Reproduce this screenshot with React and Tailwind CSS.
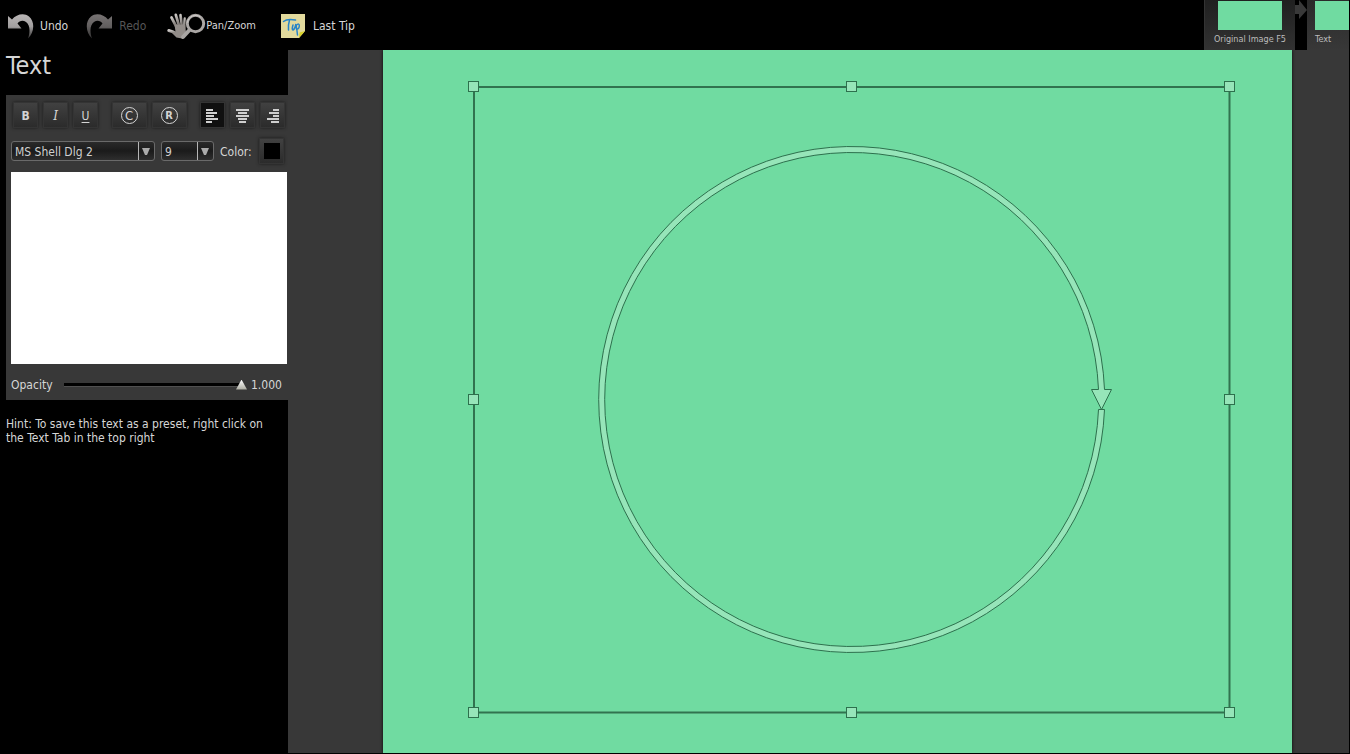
import React, { useState } from "react";

const font = "font-['DejaVu_Sans_Condensed','DejaVu_Sans',sans-serif]";

function UndoIcon({ flipped = false }) {
  const id = flipped ? "redo-fill" : "undo-fill";
  return (
    <svg width="26" height="25" viewBox="0 0 26 25" aria-hidden="true">
      <defs>
        <linearGradient id={id} x1="0" y1="0" x2="0" y2="1">
          <stop offset="0" stopColor={flipped ? "#777373" : "#b9b5b5"} />
          <stop offset="0.5" stopColor={flipped ? "#625f5f" : "#a29f9f"} />
          <stop offset="1" stopColor="#343333" />
        </linearGradient>
      </defs>
      <path
        d="M0 2 L4 5.500 C8 0.500 16 -1.500 21 2.500 C27.500 8 26 19 20 24.500 C22.500 17.500 22 11 18 8 C14.500 5.800 11.500 7 9.500 9.500 L13.500 14.500 L0 14.500 Z"
        fill={`url(#${id})`}
        transform={flipped ? "translate(26 0) scale(-1 1)" : undefined}
      />
    </svg>
  );
}

function PanZoomIcon() {
  return (
    <svg width="39" height="27" viewBox="0 0 39 27" aria-hidden="true">
      <defs>
        <linearGradient id="hand" x1="0" y1="0" x2="0.3" y2="1">
          <stop offset="0" stopColor="#c9c5c2" />
          <stop offset="1" stopColor="#77716d" />
        </linearGradient>
      </defs>
      <g stroke="url(#hand)" strokeLinecap="round" fill="none">
        <path d="M9.500 14 L4.500 4.500" strokeWidth="2.700" />
        <path d="M12.500 14 L8.800 1.800" strokeWidth="2.700" />
        <path d="M15 14 L13.500 2" strokeWidth="2.600" />
        <path d="M17 16 L17.800 5.500" strokeWidth="2.400" />
        <path d="M10 21 L6 18.800 L1.800 17.500" strokeWidth="2.900" />
      </g>
      <path d="M7.500 11.500 L18.200 11.500 L19 20 L15 25.500 L9.500 24.500 L5 20 L8.500 18.500 Z" fill="#928c88" />
      <path d="M22.500 17 L16 24" stroke="#a9a6a4" strokeWidth="4" strokeLinecap="round" />
      <circle cx="28.500" cy="10.500" r="8.200" fill="#000" stroke="#aaa6a4" strokeWidth="3" />
      <path d="M20.500 9.500 A8.200 8.200 0 0 1 33.500 4" fill="none" stroke="#d0cdcb" strokeWidth="1" />
    </svg>
  );
}

function TipIcon() {
  return (
    <svg width="24" height="24" viewBox="0 0 24 24" aria-hidden="true">
      <path d="M0 0 H24 V17 L18 24 H0 Z" fill="#e2da9d" />
      <path d="M24 17 L18 24 L18.500 18.500 Z" fill="#d8d22c" />
      <g fill="none" stroke="#2684c9" strokeWidth="1.500" strokeLinecap="round" strokeLinejoin="round">
        <path d="M2.500 7.500 Q6 4.500 14.500 6" />
        <path d="M8.500 6 Q7 11 7.500 16" />
        <path d="M12 11 Q10.500 16 12 16 Q14 15 14.800 10.500 Q16 15 16.500 21" />
        <path d="M15 11.500 Q18.500 8.500 18.300 12 Q18 15.500 15.500 15" />
      </g>
    </svg>
  );
}

const alignLines = {
  left: [7, 11, 8, 12, 6],
  center: [13, 9, 13, 9, 7],
  right: [6, 10, 6, 12, 8],
};

function AlignIcon({ align }) {
  return (
    <svg width="13" height="15" viewBox="0 0 13 15" aria-hidden="true">
      {alignLines[align].map((w, i) => (
        <rect
          key={i}
          x={align === "left" ? 0 : align === "center" ? (13 - w) / 2 : 13 - w}
          y={i * 3 + 1}
          width={w}
          height="2"
          fill="#cfcfcf"
        />
      ))}
    </svg>
  );
}

const tool =
  "flex h-[26px] shrink-0 items-center justify-center border border-[#343434] text-[#d4d4d4] shadow-[0_0_3px_#1c1c1c]";
const raised = "bg-linear-to-b from-[#414141] to-[#2b2b2b]";

function ToolButton({ label, wide, pressed, children }) {
  return (
    <button
      type="button"
      aria-label={label}
      aria-pressed={pressed}
      className={`${tool} pt-px ${wide ? "w-[35px]" : "w-[25px]"} ${pressed ? "bg-[#101010]" : raised}`}
    >
      {children}
    </button>
  );
}

function CircledLetter({ letter, className }) {
  return (
    <span
      className={`flex size-[17px] items-center justify-center rounded-full border border-[#d4d4d4] leading-none ${className}`}
    >
      {letter}
    </span>
  );
}

function Picker({ label, options, className }) {
  return (
    <div
      className={`grid h-5 shrink-0 rounded-[3px] border border-[#6a6a6a] bg-linear-to-b from-[#2a2a2a] via-[#1b1b1b] to-[#2e2e2e] ${className}`}
    >
      <select
        aria-label={label}
        className="col-start-1 row-start-1 w-full appearance-none bg-transparent pt-px pr-4 pl-[3px] text-xs text-[#d0d0d0] outline-none"
      >
        {options.map((o) => (
          <option key={o} className="bg-[#222]">
            {o}
          </option>
        ))}
      </select>
      <span className="pointer-events-none col-start-1 row-start-1 flex w-4 items-center justify-start justify-self-end border-l border-[#b5b5b5] pl-[3px]">
        <svg width="8" height="7" viewBox="0 0 8 7" aria-hidden="true">
          <path d="M0 0 H8 L5 7 H3 Z" fill="#aaa" />
        </svg>
      </span>
    </div>
  );
}

const handles = [
  [91, 37],
  [468.5, 37],
  [846.5, 37],
  [91, 349.5],
  [846.5, 349.5],
  [91, 662.5],
  [468.5, 662.5],
  [846.5, 662.5],
];

function Canvas() {
  return (
    <svg
      viewBox="0 0 909 703"
      preserveAspectRatio="xMidYMin meet"
      className="block w-full"
      role="img"
      aria-label="Circular text path"
    >
      <rect x="91" y="37" width="755.5" height="625.5" fill="none" stroke="#31734f" strokeWidth="2" />
      <g fill="#96e5b9" stroke="#2d704d" strokeWidth="1">
        <path d="M721.500 359.500 A253 253 0 1 1 721.500 339.500 H728.500 L718.500 359.500 L708.500 339.500 H715.500 A247 247 0 1 0 715.500 359.500 Z" />
        {handles.map(([x, y]) => (
          <rect key={`${x}-${y}`} x={Math.ceil(x) - 5.5} y={Math.ceil(y) - 5.5} width="10" height="10" />
        ))}
      </g>
    </svg>
  );
}

export default function App() {
  const [text, setText] = useState("");
  const [opacity, setOpacity] = useState(1);

  return (
    <div className={`flex min-h-screen flex-col border-r border-b border-black bg-black text-xs text-[#d6d6d6] ${font}`}>
      <header className="flex h-[50px] items-start">
        <nav className="flex h-full items-center pt-[2px] pl-2" aria-label="Tools">
          <button type="button" className="flex items-center gap-[6px]">
            <UndoIcon />
            Undo
          </button>
          <button type="button" disabled className="ml-[18px] flex items-center gap-[7px] text-[#565656]">
            <UndoIcon flipped />
            Redo
          </button>
          <button type="button" className="ml-[21px] flex items-center text-[11px]">
            <PanZoomIcon />
            Pan/Zoom
          </button>
          <button type="button" className="ml-[25px] flex items-center gap-2">
            <TipIcon />
            Last Tip
          </button>
        </nav>
        <div className="ml-auto flex h-full text-[9px] text-[#bcbcbc]">
          <button
            type="button"
            className="flex w-[91px] flex-col items-center border-l border-[#333] bg-linear-to-b from-[#202020] to-[#323232] pt-px"
          >
            <span className="h-[29px] w-16 bg-[#70dba1]" />
            <span className="mt-[3px] leading-3 whitespace-nowrap">Original Image F5</span>
          </button>
          <svg width="12" height="20" viewBox="0 0 12 20" aria-hidden="true">
            <path d="M0 5 H4 V0 L12 10 L4 19 V14 H0 Z" fill="#393939" />
          </svg>
          <button
            type="button"
            className="flex w-[42px] flex-col items-start bg-linear-to-b from-[#2a2a2a] to-[#383838] pt-px pl-2"
          >
            <span className="h-[29px] w-full bg-[#70dba1]" />
            <span className="mt-[3px] leading-3">Text</span>
          </button>
        </div>
      </header>

      <div className="flex grow">
        <aside className="w-72 shrink-0 pl-[6px]">
          <h1 className="h-[45px] text-[25px] leading-8">Text</h1>
          <section className="bg-[#383838] pt-[7px] pr-px pb-1 pl-[5px]" aria-label="Text properties">
            <div className="flex justify-between pr-[2px] pl-[2px]">
              <div className="flex gap-[5px]">
                <ToolButton label="Bold">
                  <b>B</b>
                </ToolButton>
                <ToolButton label="Italic">
                  <i className="font-['DejaVu_Serif',serif]">I</i>
                </ToolButton>
                <ToolButton label="Underline">
                  <u className="underline-offset-2">U</u>
                </ToolButton>
              </div>
              <div className="flex gap-[5px]">
                <ToolButton label="Insert copyright sign" wide>
                  <CircledLetter letter="C" className="text-[13px]" />
                </ToolButton>
                <ToolButton label="Insert registered sign" wide>
                  <CircledLetter letter="R" className="text-[11px] font-bold" />
                </ToolButton>
              </div>
              <div className="flex gap-[5px]">
                <ToolButton label="Align left" pressed>
                  <AlignIcon align="left" />
                </ToolButton>
                <ToolButton label="Align center">
                  <AlignIcon align="center" />
                </ToolButton>
                <ToolButton label="Align right">
                  <AlignIcon align="right" />
                </ToolButton>
              </div>
            </div>
            <div className="mt-[10px] flex items-center pr-[3px]">
              <Picker label="Font" options={["MS Shell Dlg 2", "Arial", "Tahoma"]} className="w-36" />
              <Picker label="Font size" options={["9", "10", "12", "14"]} className="ml-[6px] w-[53px]" />
              <label htmlFor="color" className="ml-[6px] pt-px">
                Color:
              </label>
              <button type="button" id="color" className={`${tool} ${raised} ml-auto w-[25px]`}>
                <span className="size-4 bg-black" />
              </button>
            </div>
            <textarea
              aria-label="Text"
              value={text}
              onChange={(e) => setText(e.target.value)}
              className="mt-2 block h-48 w-full resize-none bg-white p-1 text-black outline-none"
            />
            <div className="flex h-8 items-center pt-[9px]">
              <label htmlFor="opacity" className="w-[53px]">
                Opacity
              </label>
              <div className="grid grow items-center">
                <span className="col-start-1 row-start-1 mr-[5px] h-1 border-b border-[#505050] bg-black" />
                <input
                  id="opacity"
                  type="range"
                  min="0"
                  max="1"
                  step="0.001"
                  value={opacity}
                  onChange={(e) => setOpacity(Number(e.target.value))}
                  className="col-start-1 row-start-1 h-3 w-full appearance-none bg-transparent [&::-webkit-slider-thumb]:h-[10px] [&::-webkit-slider-thumb]:w-[11px] [&::-webkit-slider-thumb]:appearance-none [&::-webkit-slider-thumb]:bg-linear-to-b [&::-webkit-slider-thumb]:from-white [&::-webkit-slider-thumb]:to-[#aaaa9f] [&::-webkit-slider-thumb]:[clip-path:polygon(50%_0,100%_100%,0_100%)]"
                />
              </div>
              <output htmlFor="opacity" className="w-10 pl-1">
                {opacity.toFixed(3)}
              </output>
            </div>
          </section>
          <p className="mt-[17px] pr-4 leading-[14px]">
            Hint: To save this text as a preset, right click on the Text Tab in the top right
          </p>
        </aside>

        <main className="flex grow bg-[#383838] pr-[57px] pl-[95px]">
          <div className="grow bg-[#70dba1] shadow-[0_0_3px_#0a0a0a] [clip-path:inset(0_-4px)]">
            <Canvas />
          </div>
        </main>
      </div>
    </div>
  );
}
